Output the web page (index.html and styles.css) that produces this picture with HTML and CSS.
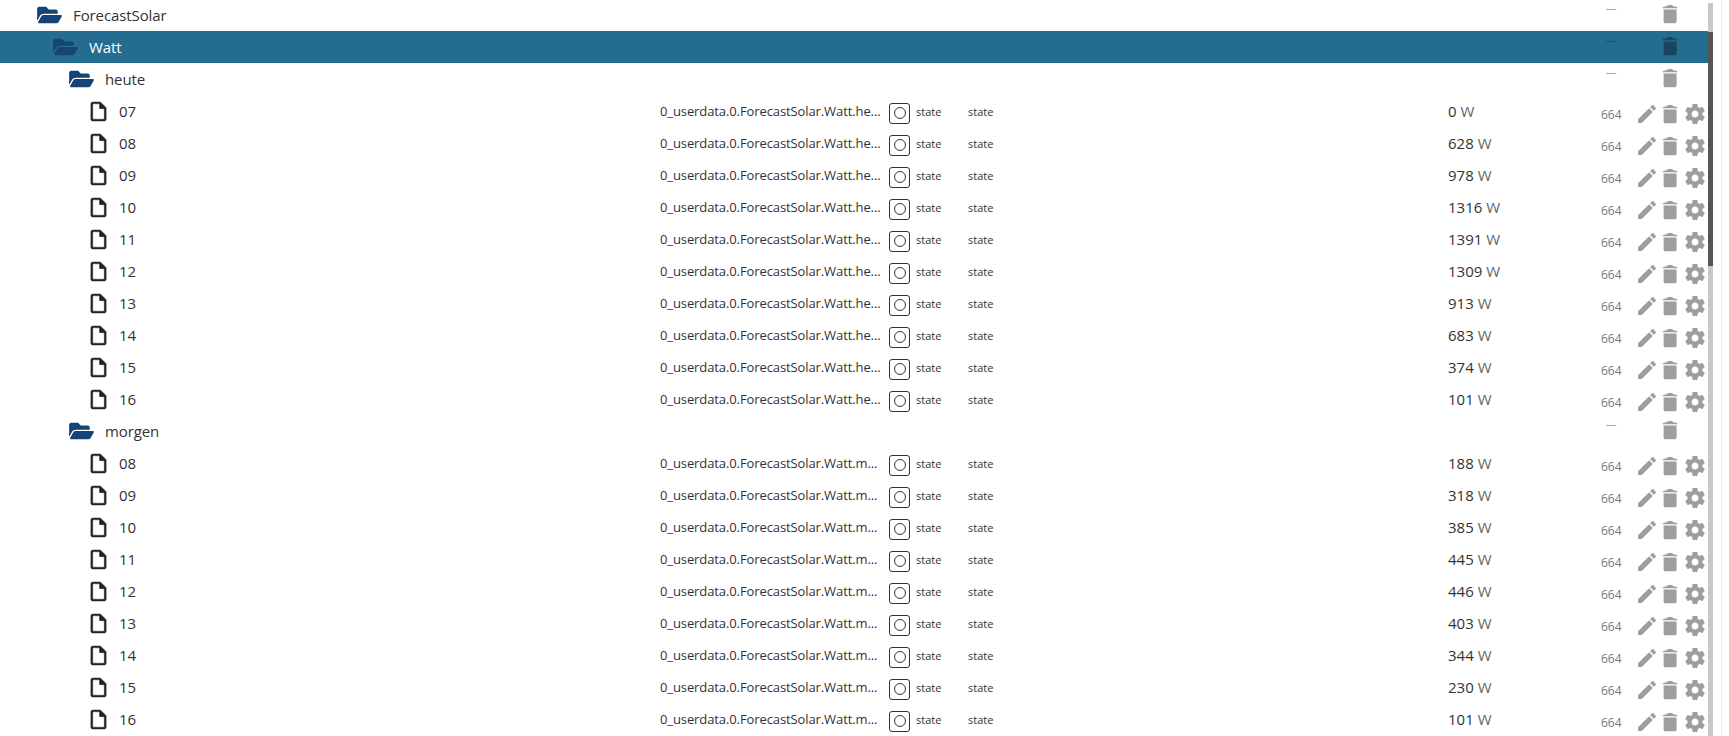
FILE: index.html
```html
<!DOCTYPE html>
<html lang="en">
<head>
    <meta charset="UTF-8">
    <title>Objects</title>
    <link rel="stylesheet" href="styles.css">
</head>
<body>
    <svg class="icon-defs" xmlns="http://www.w3.org/2000/svg">
        <symbol id="i-folder" viewBox="0 0 576 512"><path d="M572.694 292.093L500.27 416.248A63.997 63.997 0 0 1 444.989 448H45.025c-18.523 0-30.064-20.093-20.731-36.093l72.424-124.155A64 64 0 0 1 152 256h399.964c18.523 0 30.064 20.093 20.73 36.093zM152 224h328v-48c0-26.51-21.49-48-48-48H272l-64-64H48C21.49 64 0 85.49 0 112v278.046l69.077-118.418C86.214 242.25 117.989 224 152 224z"/></symbol>
        <symbol id="i-file" viewBox="0 0 24 24"><path d="M14 2H6c-1.1 0-2 .9-2 2v16c0 1.100.9 2 2 2h12c1.100 0 2-.9 2-2V8l-6-6zM6 20V4h7v5h5v11H6z"/></symbol>
        <symbol id="i-pencil" viewBox="0 0 24 24"><path d="M3 17.250V21h3.750L17.810 9.940l-3.750-3.750L3 17.250zM20.710 7.040c.39-.39.39-1.020 0-1.410l-2.340-2.340c-.39-.39-1.020-.39-1.410 0l-1.830 1.830 3.750 3.750 1.830-1.830z"/></symbol>
        <symbol id="i-trash" viewBox="0 0 24 24"><path d="M4.600 7.500h13v12c0 1-1 1.800-2.200 1.800H6.800c-1.200 0-2.200-.8-2.200-1.800zM3.800 5.200C5.500 4.400 7.500 4 8.600 3.900V3h5v.9c1.100.1 3.100.5 4.800 1.300v1H3.800z"/></symbol>
        <symbol id="i-gear" viewBox="0 0 24 24"><path d="M19.430 12.980c.04-.32.07-.64.07-.98s-.03-.66-.07-.98l2.110-1.650c.19-.15.24-.42.120-.64l-2-3.460c-.12-.22-.39-.3-.61-.22l-2.490 1c-.52-.4-1.080-.73-1.690-.98l-.38-2.650C14.460 2.180 14.250 2 14 2h-4c-.25 0-.46.180-.49.420l-.38 2.650c-.61.250-1.170.59-1.690.98l-2.490-1c-.23-.09-.49 0-.61.220l-2 3.460c-.13.220-.07.490.12.640l2.110 1.650c-.04.320-.07.650-.07.980s.03.660.07.980l-2.110 1.650c-.19.150-.24.420-.12.640l2 3.460c.12.220.39.300.61.220l2.490-1c.52.400 1.080.730 1.690.980l.38 2.650c.03.240.24.420.49.420h4c.25 0 .46-.18.49-.42l.38-2.650c.61-.25 1.170-.59 1.690-.98l2.490 1c.23.090.49 0 .61-.22l2-3.460c.12-.22.070-.49-.12-.64l-2.110-1.650zM12 15.500c-1.930 0-3.500-1.570-3.500-3.500s1.570-3.500 3.500-3.500 3.500 1.570 3.500 3.500-1.570 3.500-3.500 3.500z"/></symbol>
    </svg>

    <div class="tree">
        <div class="row level-1">
            <svg class="folder"><use href="#i-folder"/></svg><span class="name">ForecastSolar</span>
            <span class="acl">---</span>
            <div class="actions"><span class="act-slot"></span><svg class="act"><use href="#i-trash"/></svg></div>
        </div>
        <div class="row level-2 selected">
            <svg class="folder"><use href="#i-folder"/></svg><span class="name">Watt</span>
            <span class="acl">---</span>
            <div class="actions"><span class="act-slot"></span><svg class="act"><use href="#i-trash"/></svg></div>
        </div>
        <div class="row level-3">
            <svg class="folder"><use href="#i-folder"/></svg><span class="name">heute</span>
            <span class="acl">---</span>
            <div class="actions"><span class="act-slot"></span><svg class="act"><use href="#i-trash"/></svg></div>
        </div>

        <div class="row level-4"><svg class="file"><use href="#i-file"/></svg><span class="name">07</span><span class="object-id">0_userdata.0.ForecastSolar.Watt.he...</span><span class="state-box"></span><span class="type">state</span><span class="role">state</span><span class="value">0 <span class="unit">W</span></span><span class="mode">664</span><div class="actions"><svg class="act"><use href="#i-pencil"/></svg><svg class="act"><use href="#i-trash"/></svg><svg class="act"><use href="#i-gear"/></svg></div></div>
        <div class="row level-4"><svg class="file"><use href="#i-file"/></svg><span class="name">08</span><span class="object-id">0_userdata.0.ForecastSolar.Watt.he...</span><span class="state-box"></span><span class="type">state</span><span class="role">state</span><span class="value">628 <span class="unit">W</span></span><span class="mode">664</span><div class="actions"><svg class="act"><use href="#i-pencil"/></svg><svg class="act"><use href="#i-trash"/></svg><svg class="act"><use href="#i-gear"/></svg></div></div>
        <div class="row level-4"><svg class="file"><use href="#i-file"/></svg><span class="name">09</span><span class="object-id">0_userdata.0.ForecastSolar.Watt.he...</span><span class="state-box"></span><span class="type">state</span><span class="role">state</span><span class="value">978 <span class="unit">W</span></span><span class="mode">664</span><div class="actions"><svg class="act"><use href="#i-pencil"/></svg><svg class="act"><use href="#i-trash"/></svg><svg class="act"><use href="#i-gear"/></svg></div></div>
        <div class="row level-4"><svg class="file"><use href="#i-file"/></svg><span class="name">10</span><span class="object-id">0_userdata.0.ForecastSolar.Watt.he...</span><span class="state-box"></span><span class="type">state</span><span class="role">state</span><span class="value">1316 <span class="unit">W</span></span><span class="mode">664</span><div class="actions"><svg class="act"><use href="#i-pencil"/></svg><svg class="act"><use href="#i-trash"/></svg><svg class="act"><use href="#i-gear"/></svg></div></div>
        <div class="row level-4"><svg class="file"><use href="#i-file"/></svg><span class="name">11</span><span class="object-id">0_userdata.0.ForecastSolar.Watt.he...</span><span class="state-box"></span><span class="type">state</span><span class="role">state</span><span class="value">1391 <span class="unit">W</span></span><span class="mode">664</span><div class="actions"><svg class="act"><use href="#i-pencil"/></svg><svg class="act"><use href="#i-trash"/></svg><svg class="act"><use href="#i-gear"/></svg></div></div>
        <div class="row level-4"><svg class="file"><use href="#i-file"/></svg><span class="name">12</span><span class="object-id">0_userdata.0.ForecastSolar.Watt.he...</span><span class="state-box"></span><span class="type">state</span><span class="role">state</span><span class="value">1309 <span class="unit">W</span></span><span class="mode">664</span><div class="actions"><svg class="act"><use href="#i-pencil"/></svg><svg class="act"><use href="#i-trash"/></svg><svg class="act"><use href="#i-gear"/></svg></div></div>
        <div class="row level-4"><svg class="file"><use href="#i-file"/></svg><span class="name">13</span><span class="object-id">0_userdata.0.ForecastSolar.Watt.he...</span><span class="state-box"></span><span class="type">state</span><span class="role">state</span><span class="value">913 <span class="unit">W</span></span><span class="mode">664</span><div class="actions"><svg class="act"><use href="#i-pencil"/></svg><svg class="act"><use href="#i-trash"/></svg><svg class="act"><use href="#i-gear"/></svg></div></div>
        <div class="row level-4"><svg class="file"><use href="#i-file"/></svg><span class="name">14</span><span class="object-id">0_userdata.0.ForecastSolar.Watt.he...</span><span class="state-box"></span><span class="type">state</span><span class="role">state</span><span class="value">683 <span class="unit">W</span></span><span class="mode">664</span><div class="actions"><svg class="act"><use href="#i-pencil"/></svg><svg class="act"><use href="#i-trash"/></svg><svg class="act"><use href="#i-gear"/></svg></div></div>
        <div class="row level-4"><svg class="file"><use href="#i-file"/></svg><span class="name">15</span><span class="object-id">0_userdata.0.ForecastSolar.Watt.he...</span><span class="state-box"></span><span class="type">state</span><span class="role">state</span><span class="value">374 <span class="unit">W</span></span><span class="mode">664</span><div class="actions"><svg class="act"><use href="#i-pencil"/></svg><svg class="act"><use href="#i-trash"/></svg><svg class="act"><use href="#i-gear"/></svg></div></div>
        <div class="row level-4"><svg class="file"><use href="#i-file"/></svg><span class="name">16</span><span class="object-id">0_userdata.0.ForecastSolar.Watt.he...</span><span class="state-box"></span><span class="type">state</span><span class="role">state</span><span class="value">101 <span class="unit">W</span></span><span class="mode">664</span><div class="actions"><svg class="act"><use href="#i-pencil"/></svg><svg class="act"><use href="#i-trash"/></svg><svg class="act"><use href="#i-gear"/></svg></div></div>

        <div class="row level-3">
            <svg class="folder"><use href="#i-folder"/></svg><span class="name">morgen</span>
            <span class="acl">---</span>
            <div class="actions"><span class="act-slot"></span><svg class="act"><use href="#i-trash"/></svg></div>
        </div>

        <div class="row level-4"><svg class="file"><use href="#i-file"/></svg><span class="name">08</span><span class="object-id">0_userdata.0.ForecastSolar.Watt.m...</span><span class="state-box"></span><span class="type">state</span><span class="role">state</span><span class="value">188 <span class="unit">W</span></span><span class="mode">664</span><div class="actions"><svg class="act"><use href="#i-pencil"/></svg><svg class="act"><use href="#i-trash"/></svg><svg class="act"><use href="#i-gear"/></svg></div></div>
        <div class="row level-4"><svg class="file"><use href="#i-file"/></svg><span class="name">09</span><span class="object-id">0_userdata.0.ForecastSolar.Watt.m...</span><span class="state-box"></span><span class="type">state</span><span class="role">state</span><span class="value">318 <span class="unit">W</span></span><span class="mode">664</span><div class="actions"><svg class="act"><use href="#i-pencil"/></svg><svg class="act"><use href="#i-trash"/></svg><svg class="act"><use href="#i-gear"/></svg></div></div>
        <div class="row level-4"><svg class="file"><use href="#i-file"/></svg><span class="name">10</span><span class="object-id">0_userdata.0.ForecastSolar.Watt.m...</span><span class="state-box"></span><span class="type">state</span><span class="role">state</span><span class="value">385 <span class="unit">W</span></span><span class="mode">664</span><div class="actions"><svg class="act"><use href="#i-pencil"/></svg><svg class="act"><use href="#i-trash"/></svg><svg class="act"><use href="#i-gear"/></svg></div></div>
        <div class="row level-4"><svg class="file"><use href="#i-file"/></svg><span class="name">11</span><span class="object-id">0_userdata.0.ForecastSolar.Watt.m...</span><span class="state-box"></span><span class="type">state</span><span class="role">state</span><span class="value">445 <span class="unit">W</span></span><span class="mode">664</span><div class="actions"><svg class="act"><use href="#i-pencil"/></svg><svg class="act"><use href="#i-trash"/></svg><svg class="act"><use href="#i-gear"/></svg></div></div>
        <div class="row level-4"><svg class="file"><use href="#i-file"/></svg><span class="name">12</span><span class="object-id">0_userdata.0.ForecastSolar.Watt.m...</span><span class="state-box"></span><span class="type">state</span><span class="role">state</span><span class="value">446 <span class="unit">W</span></span><span class="mode">664</span><div class="actions"><svg class="act"><use href="#i-pencil"/></svg><svg class="act"><use href="#i-trash"/></svg><svg class="act"><use href="#i-gear"/></svg></div></div>
        <div class="row level-4"><svg class="file"><use href="#i-file"/></svg><span class="name">13</span><span class="object-id">0_userdata.0.ForecastSolar.Watt.m...</span><span class="state-box"></span><span class="type">state</span><span class="role">state</span><span class="value">403 <span class="unit">W</span></span><span class="mode">664</span><div class="actions"><svg class="act"><use href="#i-pencil"/></svg><svg class="act"><use href="#i-trash"/></svg><svg class="act"><use href="#i-gear"/></svg></div></div>
        <div class="row level-4"><svg class="file"><use href="#i-file"/></svg><span class="name">14</span><span class="object-id">0_userdata.0.ForecastSolar.Watt.m...</span><span class="state-box"></span><span class="type">state</span><span class="role">state</span><span class="value">344 <span class="unit">W</span></span><span class="mode">664</span><div class="actions"><svg class="act"><use href="#i-pencil"/></svg><svg class="act"><use href="#i-trash"/></svg><svg class="act"><use href="#i-gear"/></svg></div></div>
        <div class="row level-4"><svg class="file"><use href="#i-file"/></svg><span class="name">15</span><span class="object-id">0_userdata.0.ForecastSolar.Watt.m...</span><span class="state-box"></span><span class="type">state</span><span class="role">state</span><span class="value">230 <span class="unit">W</span></span><span class="mode">664</span><div class="actions"><svg class="act"><use href="#i-pencil"/></svg><svg class="act"><use href="#i-trash"/></svg><svg class="act"><use href="#i-gear"/></svg></div></div>
        <div class="row level-4"><svg class="file"><use href="#i-file"/></svg><span class="name">16</span><span class="object-id">0_userdata.0.ForecastSolar.Watt.m...</span><span class="state-box"></span><span class="type">state</span><span class="role">state</span><span class="value">101 <span class="unit">W</span></span><span class="mode">664</span><div class="actions"><svg class="act"><use href="#i-pencil"/></svg><svg class="act"><use href="#i-trash"/></svg><svg class="act"><use href="#i-gear"/></svg></div></div>
    </div>
    <div class="scrollbar"><div class="thumb"></div></div>
    <div class="edge"></div>
</body>
</html>
```
FILE: styles.css
```css
* {
    margin: 0;
    padding: 0;
    box-sizing: border-box;
}

html, body {
    height: 100%;
    overflow: hidden;
}

body {
    font-family: "Open Sans", "Noto Sans", sans-serif;
    font-size: 15px;
    color: #333;
    background: white;
    display: flex;
    align-items: flex-start;
}

.icon-defs {
    display: none;
}

.tree {
    width: 1708px;
    flex-shrink: 0;
    margin-top: -1px;
}

.row {
    height: 32px;
    display: flex;
    align-items: center;
    position: relative;
}

.row.selected {
    background: #246c90;
    color: white;
}

.level-1 { padding-left: 37px; }
.level-2 { padding-left: 53px; }
.level-3 { padding-left: 69px; }
.level-4 { padding-left: 87px; }

.folder {
    width: 25px;
    height: 22px;
    fill: #164477;
    flex-shrink: 0;
}

.file {
    width: 23px;
    height: 23px;
    fill: #222;
    stroke: #222;
    stroke-width: 0.4;
    flex-shrink: 0;
    margin-top: 1px;
}

.name {
    margin-left: 11px;
    letter-spacing: -0.1px;
}

.level-4 .name {
    margin-left: 9px;
    width: 541px;
    flex-shrink: 0;
    letter-spacing: 0;
}

.object-id {
    width: 229px;
    flex-shrink: 0;
    font-size: 13px;
    white-space: nowrap;
    letter-spacing: -0.1px;
}

.state-box {
    width: 21px;
    height: 21px;
    border: 1px solid #333;
    border-radius: 3px;
    margin-top: 4px;
    display: flex;
    align-items: center;
    justify-content: center;
    flex-shrink: 0;
}

.state-box::after {
    content: "";
    width: 10px;
    height: 10px;
    border: 1px solid #333;
    border-radius: 50%;
}

.type {
    font-size: 11px;
    margin-left: 6px;
    width: 52px;
    flex-shrink: 0;
}

.role {
    font-size: 11px;
    width: 480px;
    flex-shrink: 0;
}

.value {
    white-space: nowrap;
}

.unit {
    color: #666;
}

.acl {
    position: absolute;
    left: 1606px;
    top: 1px;
    font-size: 11px;
    color: #888;
}

.mode {
    position: absolute;
    left: 1601px;
    top: 11px;
    font-size: 12px;
    color: #777;
}

.actions {
    position: absolute;
    left: 1635px;
    top: 3px;
    width: 72px;
    height: 24px;
    display: flex;
    align-items: center;
}

.level-4 .actions {
    top: 7px;
}

.act, .act-slot {
    width: 24px;
    height: 24px;
    fill: #9e9e9e;
    flex-shrink: 0;
}

.selected .act {
    fill: #18465f;
}

.selected .acl {
    color: #18465f;
}

.scrollbar {
    width: 5px;
    height: 100%;
    margin-top: 3px;
    padding-top: 29px;
    background: #c8c8c8;
    flex-shrink: 0;
}

.thumb {
    height: 234px;
    background: #555;
}

.edge {
    width: 1px;
    height: 100%;
    margin-left: 8px;
    background: #eeeeee;
    flex-shrink: 0;
}
```
